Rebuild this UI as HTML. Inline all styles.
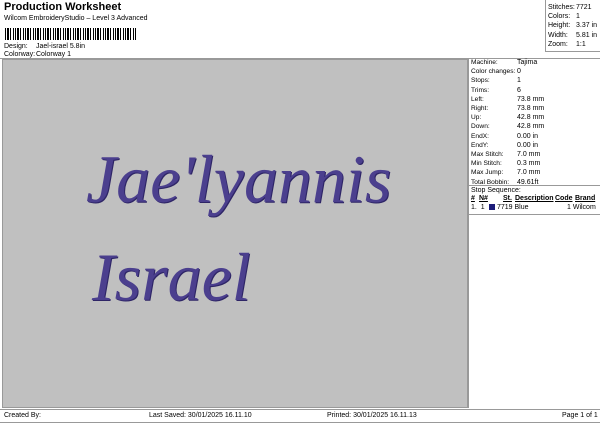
<!DOCTYPE html>
<html><head><meta charset="utf-8"><style>
*{margin:0;padding:0;box-sizing:border-box}
body{width:600px;height:424px;background:#fff;font-family:"Liberation Sans",sans-serif;font-size:7px;color:#000;position:relative;overflow:hidden}
.a{position:absolute;white-space:nowrap}
.gray{position:absolute;left:2px;top:59px;width:466px;height:349px;background:#c0c0c0;border:1px solid #999}
.bar{position:absolute;left:5px;top:28px;width:132px;height:12px;background:repeating-linear-gradient(90deg,#000 0 1px,#fff 1px 2px,#000 2px 4px,#fff 4px 5px,#000 5px 6px,#fff 6px 8px,#000 8px 9px,#fff 9px 10px)}
.script{position:absolute;font-family:"Liberation Serif",serif;font-style:italic;color:#4b3f8e;text-shadow:1px 1px 0 #2e2566}
</style></head><body>
<div class="a" style="left:4px;top:1px;font-size:11px;font-weight:bold">Production Worksheet</div>
<div class="a" style="left:4px;top:15px">Wilcom EmbroideryStudio – Level 3 Advanced</div>
<div class="bar"></div>
<div class="a" style="left:4px;top:43px">Design:</div><div class="a" style="left:36px;top:43px">Jael-israel 5.8in</div>
<div class="a" style="left:4px;top:51px">Colorway:</div><div class="a" style="left:36px;top:51px">Colorway 1</div>
<div style="position:absolute;left:0;top:58px;width:600px;border-top:1px solid #999"></div>
<div style="position:absolute;left:545px;top:0;height:52px;border-left:1px solid #999"></div>
<div style="position:absolute;left:545px;top:51px;width:55px;border-top:1px solid #999"></div>
<div class="a" style="left:548px;top:3px;line-height:9.2px">Stitches:<br>Colors:<br>Height:<br>Width:<br>Zoom:</div>
<div class="a" style="left:576px;top:3px;line-height:9.2px">7721<br>1<br>3.37 in<br>5.81 in<br>1:1</div>
<div class="gray"></div>
<div class="script" style="left:86px;top:140px;font-size:68px">Jae'lyannis</div>
<div class="script" style="left:92px;top:238px;font-size:68px">Israel</div>
<div style="position:absolute;left:468px;top:59px;width:1px;height:349px;background:#999"></div>
<div class="a" style="left:471px;top:58px;line-height:9.2px;font-size:6.6px">Machine:<br>Color changes:<br>Stops:<br>Trims:<br>Left:<br>Right:<br>Up:<br>Down:<br>EndX:<br>EndY:<br>Max Stitch:<br>Min Stitch:<br>Max Jump:<br>Total Bobbin:</div>
<div class="a" style="left:517px;top:58px;line-height:9.2px">Tajima<br>0<br>1<br>6<br>73.8 mm<br>73.8 mm<br>42.8 mm<br>42.8 mm<br>0.00 in<br>0.00 in<br>7.0 mm<br>0.3 mm<br>7.0 mm<br>49.61ft</div>
<div style="position:absolute;left:469px;top:185px;width:131px;border-top:1px solid #999"></div>
<div class="a" style="left:471px;top:187px">Stop Sequence:</div>
<div class="a" style="left:471px;top:195px;font-weight:bold;text-decoration:underline">#</div>
<div class="a" style="left:479px;top:195px;font-weight:bold;text-decoration:underline">N#</div>
<div class="a" style="left:503px;top:195px;font-weight:bold;text-decoration:underline">St.</div>
<div class="a" style="left:515px;top:195px;font-weight:bold;text-decoration:underline">Description</div>
<div class="a" style="left:555px;top:195px;font-weight:bold;text-decoration:underline">Code</div>
<div class="a" style="left:575px;top:195px;font-weight:bold;text-decoration:underline">Brand</div>
<div class="a" style="left:471px;top:204px">1.&nbsp; 1</div>
<div style="position:absolute;left:489px;top:204px;width:6px;height:6px;background:#1c1c7a"></div>
<div class="a" style="left:497px;top:204px">7719 Blue</div>
<div class="a" style="left:567px;top:204px">1 Wilcom</div>
<div style="position:absolute;left:469px;top:214px;width:131px;border-top:1px solid #999"></div>
<div style="position:absolute;left:0;top:409px;width:600px;border-top:1px solid #999"></div>
<div style="position:absolute;left:0;top:422px;width:600px;border-top:1px solid #999"></div>
<div class="a" style="left:4px;top:412px">Created By:</div>
<div class="a" style="left:149px;top:412px">Last Saved: 30/01/2025 16.11.10</div>
<div class="a" style="left:327px;top:412px">Printed: 30/01/2025 16.11.13</div>
<div class="a" style="left:562px;top:412px">Page 1 of 1</div>
</body></html>
